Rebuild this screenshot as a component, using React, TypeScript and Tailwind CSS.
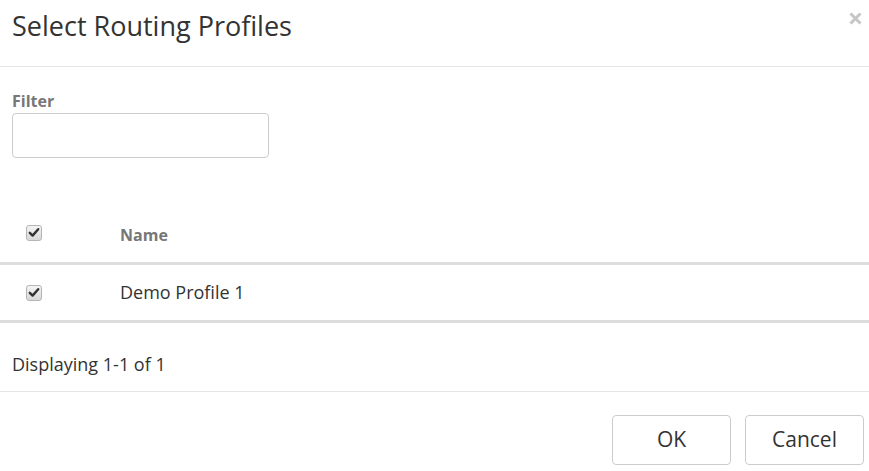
import React from "react";

function Check() {
  return (
    <span className="inline-flex h-[16px] w-[16px] items-center justify-center rounded-[3px] border border-[#b5b5b5] bg-gradient-to-b from-[#f4f4f4] to-[#d8d8d8]">
      <svg width="12" height="11" viewBox="0 0 12 11">
        <path d="M1.8 5.8 L4.6 8.6 L10.2 2.2" fill="none" stroke="#333" strokeWidth="2.4" strokeLinecap="round" strokeLinejoin="round" />
      </svg>
    </span>
  );
}

export default function App() {
  return (
    <div className="w-[869px] h-[471px] bg-white text-[#333] overflow-hidden" style={{ fontFamily: '"Open Sans", sans-serif' }}>
      <div className="relative h-[67px] border-b border-[#e5e5e5] px-[12px] pt-[6px]">
        <h1 className="text-[27px] leading-[40px] font-normal text-[#333]">Select Routing Profiles</h1>
        <svg className="absolute left-[849px] top-[12px]" width="13" height="13" viewBox="0 0 13 13">
          <path d="M1.5 1.5 L11.5 11.5 M11.5 1.5 L1.5 11.5" stroke="#c6c6c6" strokeWidth="3" />
        </svg>
      </div>
      <div className="px-[12px] pt-[23px]">
        <label className="block text-[16px] font-bold leading-[22px] text-[#777]">Filter</label>
        <input className="mt-[1px] block h-[45px] w-[257px] rounded-[4px] border border-[#ccc] bg-white" />
      </div>
      <div className="mt-[50px]">
        <div className="flex h-[57px] items-center border-b-[3px] border-[#ddd]">
          <div className="w-[120px] pl-[26px] pb-[6px]"><Check /></div>
          <div className="text-[16px] font-bold text-[#777]">Name</div>
        </div>
        <div className="flex h-[58px] items-center border-b-[3px] border-[#ddd]">
          <div className="w-[120px] pl-[26px] pb-[1px]"><Check /></div>
          <div className="text-[18px] text-[#333]">Demo Profile 1</div>
        </div>
      </div>
      <div className="flex h-[69px] items-center border-b border-[#e5e5e5] px-[12px] pt-[14px] text-[18px] text-[#333]">
        Displaying 1-1 of 1
      </div>
      <div className="flex justify-end gap-[14px] pr-[5px] pt-[23px]">
        <button className="h-[50px] w-[119px] rounded-[4px] border border-[#ccc] bg-white text-[21px] text-[#333]">OK</button>
        <button className="h-[50px] w-[119px] rounded-[4px] border border-[#ccc] bg-white text-[21px] text-[#333]">Cancel</button>
      </div>
    </div>
  );
}
